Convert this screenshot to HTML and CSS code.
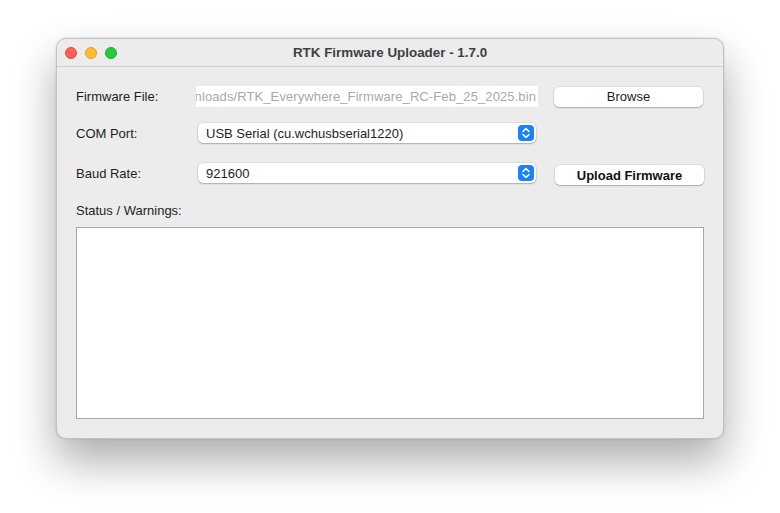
FILE: index.html
```html
<!DOCTYPE html>
<html>
<head>
<meta charset="utf-8">
<link rel="stylesheet" href="styles.css">
</head>
<body>
<div class="window">
  <div class="titlebar">
    <div class="lights">
      <span class="light red"></span>
      <span class="light yellow"></span>
      <span class="light green"></span>
    </div>
    <div class="title">RTK Firmware Uploader - 1.7.0</div>
  </div>
  <div class="content">
    <div class="row row-file">
      <div class="label">Firmware File:</div>
      <div class="field"><span class="field-text">nloads/RTK_Everywhere_Firmware_RC-Feb_25_2025.bin</span></div>
      <button class="btn">Browse</button>
    </div>
    <div class="row row-com">
      <div class="label">COM Port:</div>
      <div class="select">
        <span class="select-text">USB Serial (cu.wchusbserial1220)</span>
        <span class="chev"><svg width="16" height="16" viewBox="0 0 16 16"><path d="M5 6.5 L8 3.6 L11 6.5 M5 9.5 L8 12.4 L11 9.5" fill="none" stroke="#fff" stroke-width="1.6" stroke-linecap="round" stroke-linejoin="round"/></svg></span>
      </div>
      <div class="spacer"></div>
    </div>
    <div class="row row-baud">
      <div class="label">Baud Rate:</div>
      <div class="select">
        <span class="select-text">921600</span>
        <span class="chev"><svg width="16" height="16" viewBox="0 0 16 16"><path d="M5 6.5 L8 3.6 L11 6.5 M5 9.5 L8 12.4 L11 9.5" fill="none" stroke="#fff" stroke-width="1.6" stroke-linecap="round" stroke-linejoin="round"/></svg></span>
      </div>
      <button class="btn btn-bold">Upload Firmware</button>
    </div>
    <div class="status-label">Status / Warnings:</div>
    <div class="status-box"></div>
  </div>
</div>
</body>
</html>
```
FILE: styles.css
```css
html, body {
  margin: 0;
  padding: 0;
  background: #ffffff;
}
html { height: 100%; }
body {
  min-height: 100%;
  box-sizing: border-box;
  padding: 38px 0 0 56px;
  font-family: "Liberation Sans", Arial, sans-serif;
  font-size: 13px;
  color: #1e1e1e;
}
.window {
  width: 668px;
  height: 401px;
  box-sizing: border-box;
  background: #ececec;
  border-radius: 10px;
  border: 1px solid #c2c2c2;
  box-shadow: 0 22px 44px rgba(0,0,0,0.33), 0 0 2px rgba(0,0,0,0.18);
  overflow: hidden;
  display: flex;
  flex-direction: column;
}
.titlebar {
  height: 27px;
  flex: none;
  border-bottom: 1px solid #d0d0d0;
  background: #ececec;
  display: flex;
  align-items: center;
  position: relative;
}
.lights {
  display: flex;
  gap: 8px;
  padding-left: 8px;
}
.light {
  width: 12px;
  height: 12px;
  border-radius: 50%;
  box-sizing: border-box;
}
.red { background: #fe5f57; border: 0.5px solid #e2463f; }
.yellow { background: #febc2e; border: 0.5px solid #e1a116; }
.green { background: #28c840; border: 0.5px solid #14ae29; }
.title {
  position: absolute;
  left: 0;
  right: 0;
  top: 0;
  height: 27px;
  line-height: 27px;
  text-align: center;
  font-weight: bold;
  font-size: 13.4px;
  color: #3f3f3f;
  pointer-events: none;
}
.content {
  padding: 19px 20px 0 19px;
  display: flex;
  flex-direction: column;
}
.row {
  display: flex;
  align-items: center;
}
.label {
  width: 120px;
  flex: none;
  color: #1e1e1e;
}
.field {
  width: 342px;
  height: 21px;
  background: #ffffff;
  overflow: hidden;
  display: flex;
  justify-content: flex-end;
  align-items: center;
  white-space: nowrap;
  margin-right: 16px;
  flex: none;
}
.field-text {
  color: #a9a9a9;
  padding-right: 2px;
  letter-spacing: 0.1px;
}
.btn {
  width: 149px;
  height: 20px;
  flex: none;
  background: #ffffff;
  border: none;
  border-radius: 5px;
  box-shadow: 0 0 0 0.5px rgba(0,0,0,0.12), 0 1px 1.5px rgba(0,0,0,0.22);
  font-family: "Liberation Sans", Arial, sans-serif;
  font-size: 13px;
  color: #1e1e1e;
  padding: 0;
}
.btn-bold {
  font-weight: bold;
  margin-top: 4px;
  color: #111;
}
.row-com { margin-top: 16px; }
.row-baud { margin-top: 18px; }
.select {
  width: 338px;
  height: 20px;
  flex: none;
  margin-left: 2px;
  margin-right: 19px;
  background: #ffffff;
  border-radius: 5px;
  box-shadow: 0 0 0 0.5px rgba(0,0,0,0.12), 0 1px 1.5px rgba(0,0,0,0.22);
  display: flex;
  align-items: center;
  justify-content: space-between;
  box-sizing: border-box;
  padding-left: 8px;
  padding-right: 2px;
}
.select-text { color: #1e1e1e; }
.chev {
  width: 16px;
  height: 16px;
  border-radius: 4px;
  background: #1a82fb;
  display: flex;
}
.spacer { width: 149px; }
.status-label {
  margin-top: 18px;
  height: 16px;
}
.status-box {
  margin-top: 8px;
  width: 628px;
  height: 192px;
  box-sizing: border-box;
  background: #ffffff;
  border: 1px solid #a8a8a8;
}
```
